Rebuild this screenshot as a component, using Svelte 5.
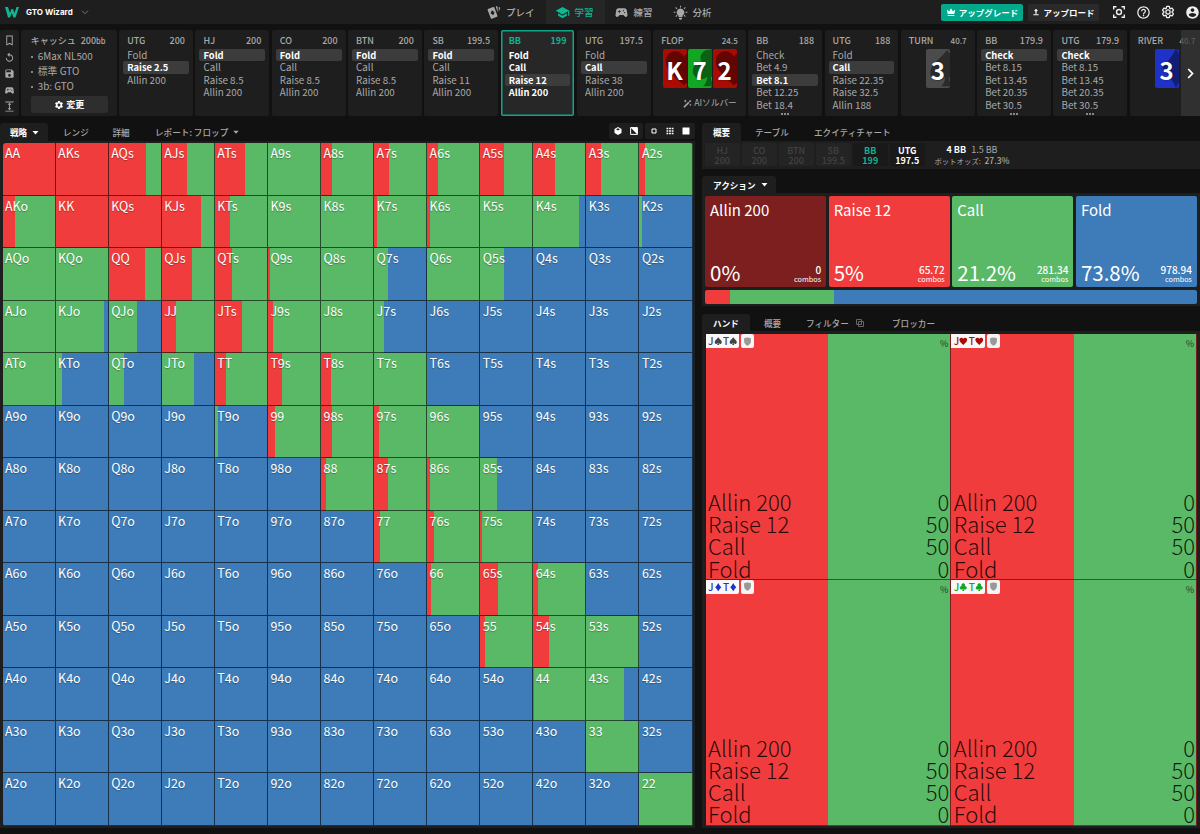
<script>
  const ranks = ['A', 'K', 'Q', 'J', 'T', '9', '8', '7', '6', '5', '4', '3', '2'];

  // r = raise then call, g = call then fold, b = fold; the number is the first share in %
  const strategy = [
    'r r r70 r47 r56 g r20 r28 r21 r46 r42 r28 r11',
    'r23 r r r74 r28 g g r5 r5 g g87 b g6',
    'g g r67 r57 r33 r4 g g26 g g46 b b b',
    'g g90 g53 r27 r50 r9 g g18 b b b b b',
    'g g11 g29 g60 r20 r26 r19 g b b b b b',
    'b b b b g6 r14 r20 r9 g b b b b',
    'b b b b b b r10 r27 r5 g33 b b b',
    'b b b b b b b r11 r13 r4 b b b',
    'b b b b b b b b r7 r34 r10 b b',
    'b b b b b b b b b r9 r30 g b',
    'b b b b b b b b b b r2 g72 b',
    'b b b b b b b b b b b g b',
    'b b b b b b b b b b b b g'
  ];

  const colors = { r: '#f03c3c', g: '#5ab966', b: '#3d7cb8' };
  const next = { r: 'g', g: 'b', b: 'b' };

  function handName(row, col) {
    if (row === col) return ranks[row] + ranks[row];
    return row < col ? ranks[row] + ranks[col] + 's' : ranks[col] + ranks[row] + 'o';
  }

  function fill(code) {
    const kind = code[0];
    const share = code.length > 1 ? Number(code.slice(1)) : 100;
    return `linear-gradient(90deg, ${colors[kind]} ${share}%, ${colors[next[kind]]} ${share}%)`;
  }

  const cells = strategy.flatMap((line, row) =>
    line.split(' ').map((code, col) => ({ name: handName(row, col), background: fill(code) }))
  );

  const steps = [
    { name: 'UTG', stack: '200', actions: ['Fold', 'Raise 2.5', 'Allin 200'], picked: 1 },
    { name: 'HJ', stack: '200', actions: ['Fold', 'Call', 'Raise 8.5', 'Allin 200'], picked: 0 },
    { name: 'CO', stack: '200', actions: ['Fold', 'Call', 'Raise 8.5', 'Allin 200'], picked: 0 },
    { name: 'BTN', stack: '200', actions: ['Fold', 'Call', 'Raise 8.5', 'Allin 200'], picked: 0 },
    { name: 'SB', stack: '199.5', actions: ['Fold', 'Call', 'Raise 11', 'Allin 200'], picked: 0 },
    { name: 'BB', stack: '199', actions: ['Fold', 'Call', 'Raise 12', 'Allin 200'], picked: 2, active: true },
    { name: 'UTG', stack: '197.5', actions: ['Fold', 'Call', 'Raise 38', 'Allin 200'], picked: 1 },
    { name: 'FLOP', stack: '24.5', cards: [['K', 'heart'], ['7', 'club'], ['2', 'heart']] },
    { name: 'BB', stack: '188', actions: ['Check', 'Bet 4.9', 'Bet 8.1', 'Bet 12.25', 'Bet 18.4'], picked: 2, more: true },
    { name: 'UTG', stack: '188', actions: ['Fold', 'Call', 'Raise 22.35', 'Raise 32.5', 'Allin 188'], picked: 1 },
    { name: 'TURN', stack: '40.7', cards: [['3', 'spade']] },
    { name: 'BB', stack: '179.9', actions: ['Check', 'Bet 8.15', 'Bet 13.45', 'Bet 20.35', 'Bet 30.5'], picked: 0, more: true },
    { name: 'UTG', stack: '179.9', actions: ['Check', 'Bet 8.15', 'Bet 13.45', 'Bet 20.35', 'Bet 30.5'], picked: 0, more: true },
    { name: 'RIVER', stack: '40.7', cards: [['3', 'diamond']] }
  ];

  const positions = [
    { name: 'HJ', stack: '200', state: 'out' },
    { name: 'CO', stack: '200', state: 'out' },
    { name: 'BTN', stack: '200', state: 'out' },
    { name: 'SB', stack: '199.5', state: 'out' },
    { name: 'BB', stack: '199', state: 'hero' },
    { name: 'UTG', stack: '197.5', state: 'live' }
  ];

  const actions = [
    { name: 'Allin 200', share: '0%', combos: '0', kind: 'allin' },
    { name: 'Raise 12', share: '5%', combos: '65.72', kind: 'raise' },
    { name: 'Call', share: '21.2%', combos: '281.34', kind: 'call' },
    { name: 'Fold', share: '73.8%', combos: '978.94', kind: 'fold' }
  ];

  const hands = ['spade', 'heart', 'diamond', 'club'];
  const handRows = [['Allin 200', 0], ['Raise 12', 50], ['Call', 50], ['Fold', 0]];

  const gear = 'M19.14 12.94c.04-.3.06-.61.06-.94 0-.32-.02-.64-.07-.94l2.03-1.58c.18-.14.23-.41.12-.61l-1.92-3.32c-.12-.22-.37-.29-.59-.22l-2.39.96c-.5-.38-1.03-.7-1.62-.94l-.36-2.54c-.04-.24-.24-.41-.48-.41h-3.84c-.24 0-.43.17-.47.41l-.36 2.54c-.59.24-1.13.57-1.62.94l-2.39-.96c-.22-.08-.47 0-.59.22L2.74 8.87c-.12.21-.08.47.12.61l2.03 1.58c-.05.3-.09.63-.09.94s.02.64.07.94l-2.03 1.58c-.18.14-.23.41-.12.61l1.92 3.32c.12.22.37.29.59.22l2.39-.96c.5.38 1.03.7 1.62.94l.36 2.54c.05.24.24.41.48.41h3.84c.24 0 .44-.17.47-.41l.36-2.54c.59-.24 1.13-.56 1.62-.94l2.39.96c.22.08.47 0 .59-.22l1.92-3.32c.12-.22.07-.47-.12-.61l-2.01-1.58zM12 15.6c-1.98 0-3.6-1.62-3.6-3.6s1.62-3.6 3.6-3.6 3.6 1.62 3.6 3.6-1.62 3.6-3.6 3.6z';

  const icons = {
    bookmark: 'M19 1H5v22l7-3.6 7 3.6zm-2 18.6l-5-2.5-5 2.5V3h10z',
    replay: 'M12 5V1L7 6l5 5V7c3.31 0 6 2.69 6 6s-2.69 6-6 6-6-2.69-6-6H4c0 4.42 3.58 8 8 8s8-3.58 8-8-3.58-8-8-8z',
    save: 'M17 3H5c-1.11 0-2 .9-2 2v14c0 1.1.89 2 2 2h14c1.1 0 2-.9 2-2V7l-4-4zm-5 16c-1.66 0-3-1.34-3-3s1.34-3 3-3 3 1.34 3 3-1.34 3-3 3zm3-10H5V5h10v4z',
    gamepad: 'M21.58 16.09l-1.09-7.66C20.21 6.46 18.52 5 16.53 5H7.47C5.48 5 3.79 6.46 3.51 8.43l-1.09 7.66C2.2 17.63 3.39 19 4.94 19c.68 0 1.32-.27 1.8-.75L9 16h6l2.25 2.25c.48.48 1.13.75 1.8.75 1.56 0 2.75-1.37 2.53-2.91zM11 11H9v2H8v-2H6v-1h2V8h1v2h2v1zm4-1c-.55 0-1-.45-1-1s.45-1 1-1 1 .45 1 1-.45 1-1 1zm2 3c-.55 0-1-.45-1-1s.45-1 1-1 1 .45 1 1-.45 1-1 1z',
    expand: 'M3 1h18v2H3zM3 21h18v2H3zM12 4l4 4h-3v8h3l-4 4-4-4h3V8H8z',
    cards: 'M3 6.5l8.500-3.300c.8-.3 1.500 0 1.800.8l5 13c.3.8 0 1.500-.8 1.800L9.500 22c-.8.300-1.500 0-1.800-.8l-5-13c-.3-.8-.1-1.400.3-1.700zM9.500 8.500l-2.300 4.800 4.500 3.200 2-5zM15.500 2h1.800c.8 0 1.300.5 1.300 1.300v8.500zM20.500 3l1.300.5c.8.3 1 1 .7 1.700l-2 5.500z',
    school: 'M5 13.18v4L12 21l7-3.82v-4L12 17l-7-3.82zM12 3L1 9l11 6 9-4.91V17h2V9L12 3z',
    bulb: 'M12 5.500a6 6 0 0 0-3.200 11.100V19h6.400v-2.400A6 6 0 0 0 12 5.500zM9.500 20.200h5V22l-1.500 1.500h-2L9.500 22zM11.200 1h1.600v3h-1.600zM1 10.700h3v1.600H1zM20 10.700h3v1.600h-3zM3.600 4.500l1.200-1.200L7 5.500 5.800 6.700zM17 5.500l2.200-2.200 1.200 1.200-2.200 2.200zM3.800 17.800L6 15.600l1.200 1.200L5 19zM17 16.800l1.200-1.200 2.200 2.200-1.200 1.200z',
    crown: 'M2 6l5.500 4.500L12 3l4.500 7.500L22 6l-2 11H4zM4 19h16v2.500H4z',
    upload: 'M12 2l6 7h-4v8h-4V9H6zM4 19h16v3H4z',
    gear,
    help: 'M11 18h2v-2h-2v2zm1-16C6.48 2 2 6.48 2 12s4.48 10 10 10 10-4.48 10-10S17.52 2 12 2zm0 18c-4.41 0-8-3.59-8-8s3.59-8 8-8 8 3.59 8 8-3.59 8-8 8zm0-14c-2.21 0-4 1.79-4 4h2c0-1.1.9-2 2-2s2 .9 2 2c0 2-3 1.75-3 5h2c0-2.25 3-2.5 3-5 0-2.21-1.79-4-4-4z',
    account: 'M12 2C6.48 2 2 6.48 2 12s4.48 10 10 10 10-4.48 10-10S17.52 2 12 2zm0 3c1.66 0 3 1.34 3 3s-1.34 3-3 3-3-1.34-3-3 1.34-3 3-3zm0 14.2c-2.5 0-4.71-1.28-6-3.22.03-1.99 4-3.08 6-3.08 1.99 0 5.97 1.09 6 3.08-1.29 1.94-3.5 3.22-6 3.22z',
    wand: 'M1 20.500L14 7.500l3 3L4 23.500zM15.500 6L19 2.500l3 3L18.500 9zM6 1l1.300 3.200L10.500 5.500 7.300 6.800 6 10 4.700 6.800 1.500 5.500 4.700 4.200zM19.500 12l1 2.500 2.500 1-2.500 1-1 2.500-1-2.500-2.500-1 2.500-1z',
    caret: 'M4 8h16l-8 9z',
    shield: 'M3 3.500Q12-.5 21 3.500V12c0 5-4 9-9 11-5-2-9-6-9-11z',
    spade: 'M12 1C9 6 2 9.500 2 14.500c0 3.300 2.500 5 4.800 5 1.700 0 3.100-.8 4.200-2.300-.2 2.500-1 4.300-2.600 5.800h7.200c-1.600-1.500-2.400-3.300-2.600-5.800 1.100 1.500 2.500 2.300 4.200 2.300 2.300 0 4.800-1.700 4.800-5C22 9.500 15 6 12 1z',
    heart: 'M12 22.500C6 17 1 13 1 8c0-3.500 2.600-6 5.800-6C9 2 11 3.200 12 5.200 13 3.200 15 2 17.200 2 20.400 2 23 4.500 23 8c0 5-5 9-11 14.500z',
    diamond: 'M12 0c2 4.500 5 8.500 8.500 12-3.500 3.500-6.500 7.500-8.500 12-2-4.500-5-8.500-8.500-12C7 8.500 10 4.500 12 0z',
    club: 'M12 1a5 5 0 0 0-4.300 7.700A5 5 0 1 0 11 17c-.2 2.500-1 4.500-2.600 6h7.200c-1.600-1.500-2.400-3.500-2.600-6a5 5 0 1 0 3.300-8.300A5 5 0 0 0 12 1z'
  };
</script>

{#snippet icon(name, size)}
  <svg class="icon" width={size} height={size} viewBox="0 0 24 24"><path d={icons[name]} fill="currentColor" fill-rule={name === 'club' ? 'nonzero' : 'evenodd'} /></svg>
{/snippet}

<div class="app">
  <header class="topbar">
    <div class="brand">
      <svg width="14" height="11" viewBox="0 0 28 22">
        <path d="M0 0h6l4 12 3-8h3l3 8 4-12h5l-7 21h-4l-3.500-9L10 21H6z" fill="#10b592" />
      </svg>
      <span>GTO Wizard</span>
      <svg class="chev" width="8" height="5" viewBox="0 0 8 5"><path d="M1 .7l3 3 3-3" fill="none" stroke="#777" /></svg>
    </div>
    <nav>
      <a href="#play">{@render icon('cards', 15)}プレイ</a>
      <a href="#study" class="on">{@render icon('school', 15)}学習</a>
      <a href="#practice">{@render icon('gamepad', 15)}練習</a>
      <a href="#analyze">{@render icon('bulb', 15)}分析</a>
    </nav>
    <div class="tools">
      <button class="upgrade">{@render icon('crown', 10)}アップグレード</button>
      <button class="upload">{@render icon('upload', 8)}アップロード</button>
      <svg class="tool focus" width="12" height="12" viewBox="0 0 12 12" fill="none" stroke="#eee" stroke-width="1.4">
        <path d="M.7 3.500V.7h2.800M8.500.7h2.800v2.800M11.300 8.500v2.800H8.500M3.500 11.300H.7V8.500" />
        <circle cx="6" cy="6" r="2.5" />
      </svg>
      <span class="tool">{@render icon('help', 15)}</span>
      <svg class="tool" width="14" height="14" viewBox="0 0 24 24"><path d={gear} fill="none" stroke="#eee" stroke-width="2.2" /></svg>
      <span class="tool">{@render icon('account', 15)}</span>
    </div>
  </header>

  <section class="history">
    <div class="rail">
      {#each ['bookmark', 'replay', 'save', 'gamepad', 'expand'] as name}
        {@render icon(name, 11)}
      {/each}
    </div>
    <div class="setup">
      <div class="setup-title"><span>キャッシュ</span><span>200<small>bb</small></span></div>
      <ul>
        <li>6Max NL500</li>
        <li>標準 GTO</li>
        <li>3b: GTO</li>
      </ul>
      <button>{@render icon('gear', 10)}変更</button>
    </div>
    {#each steps as step}
      <div class="step" class:active={step.active} class:flop={step.name === 'FLOP'}>
        <div class="step-head" class:street={step.cards}><span>{step.name}</span><span>{step.stack}</span></div>
        {#if step.cards}
          <div class="board">
            {#each step.cards as [rank, suit]}
              <div class="card {suit}"><span class="pip">{@render icon(suit, 40)}</span><b>{rank}</b></div>
            {/each}
          </div>
          {#if step.name === 'FLOP'}
            <div class="solver">{@render icon('wand', 9)}AIソルバー</div>
          {/if}
        {:else}
          {#each step.actions as action, i}
            <div class="action" class:picked={step.picked === i}>{action}</div>
          {/each}
          {#if step.more}<div class="more"><i></i><i></i><i></i></div>{/if}
        {/if}
      </div>
    {/each}
    <button class="scroll" aria-label="next">
      <svg width="7" height="11" viewBox="0 0 7 11"><path d="M1.200 1l4.300 4.500L1.200 10" fill="none" stroke="#fff" stroke-width="1.8" /></svg>
    </button>
  </section>

  <main>
    <section class="left">
      <div class="tabs">
        <span class="tab on strategy">戦略{@render icon('caret', 9)}</span>
        <span class="tab range">レンジ</span>
        <span class="tab detail">詳細</span>
        <span class="tab report">レポート: フロップ{@render icon('caret', 8)}</span>
        <div class="views">
          <div class="view-group">
            <svg width="8" height="8" viewBox="0 0 8 8"><path d="M4 0l3.500 2v4L4 8 .5 6V2z" fill="#fff" /><path d="M4 1.200L6 2.300 4 3.400 2 2.300z" fill="#222" /></svg>
            <svg width="8" height="8" viewBox="0 0 8 8"><path d="M.6.6h6.800v6.800H.6z" fill="none" stroke="#fff" /><path d="M.6.6l6.800 6.800V.6z" fill="#fff" /></svg>
          </div>
          <div class="view-group">
            <svg width="8" height="8" viewBox="0 0 8 8"><path d="M3 1v2H1M5 1v2h2M3 7V5H1M5 7V5h2" fill="none" stroke="#fff" stroke-width="1" /></svg>
            <svg width="8" height="8" viewBox="0 0 8 8"><path d="M.5 1.500h7M.5 4h7M.5 6.500h7" stroke="#fff" stroke-width="1.6" stroke-dasharray="1.8 .8" /></svg>
            <svg width="8" height="8" viewBox="0 0 8 8"><path d="M.5.500h7v7h-7z" fill="#fff" /></svg>
          </div>
        </div>
      </div>
      <div class="matrix-panel">
        <div class="matrix">
          {#each cells as cell}
            <div class="cell" style="background: {cell.background}">{cell.name}</div>
          {/each}
        </div>
      </div>
    </section>

    <section class="right">
      <div class="tabs">
        <span class="tab on first">概要</span>
        <span class="tab table">テーブル</span>
        <span class="tab">エクイティチャート</span>
      </div>
      <div class="seats">
        {#each positions as p}
          <div class="seat {p.state}"><span>{p.name}</span><span>{p.stack}</span></div>
        {/each}
        <div class="pot">
          <div class="blinds"><b>4 BB</b><span>1.5 BB</span></div>
          <div class="odds">ポットオッズ: <b>27.3%</b></div>
        </div>
      </div>

      <div class="tabs action-tabs">
        <span class="tab on action-tab">アクション{@render icon('caret', 9)}</span>
      </div>
      <div class="actions-panel">
        <div class="action-cards">
          {#each actions as a}
            <div class="action-card {a.kind}">
              <div class="title">{a.name}</div>
              <div class="numbers">
                <span class="share">{a.share}</span>
                <span class="combos">{a.combos}<small>combos</small></span>
              </div>
            </div>
          {/each}
        </div>
        <div class="bar">
          {#each actions as a}
            <div class={a.kind} style="width: {a.share}"></div>
          {/each}
        </div>
      </div>

      <div class="tabs hand-tabs">
        <span class="tab on first">ハンド</span>
        <span class="tab summary">概要</span>
        <span class="tab filter">フィルター
          <svg width="8" height="8" viewBox="0 0 8 8" fill="none" stroke="#666"><path d="M.5.500h5v5h-5zM2.500 2.500h5v5h-5z" /></svg>
        </span>
        <span class="tab">ブロッカー</span>
      </div>
      <div class="hands-panel">
        <div class="hands">
          {#each hands as suit}
            <div class="hand">
              <div class="hand-top">
                <span class="combo {suit}">J{@render icon(suit, 8.5)}<em>T</em>{@render icon(suit, 8.5)}</span>
                <span class="guard">{@render icon('shield', 9)}</span>
                <span class="unit">%</span>
              </div>
              <div class="hand-rows">
                {#each handRows as [name, value]}
                  <div class="hand-row"><span>{name}</span><span>{value}</span></div>
                {/each}
              </div>
            </div>
          {/each}
        </div>
      </div>
    </section>
  </main>
</div>

<style>
  :global(body) {
    background: #111;
    overflow: hidden;
  }

  .app {
    width: 1200px;
    height: 834px;
    overflow: hidden;
    display: flex;
    flex-direction: column;
    background: #111;
    color: #a9a9a9;
    font-family: 'Noto Sans CJK JP', sans-serif;
    font-size: 9.5px;
    line-height: 12px;
  }

  .app * {
    box-sizing: border-box;
  }

  .icon {
    display: block;
    flex-shrink: 0;
  }

  button {
    border: 0;
    padding: 0;
    font: inherit;
    display: flex;
    align-items: center;
    justify-content: center;
  }

  .topbar {
    height: 24px;
    flex-shrink: 0;
    display: flex;
    align-items: center;
    background: #1e1e1e;
  }

  .brand {
    width: 477px;
    padding-left: 5px;
    display: flex;
    align-items: center;
    gap: 7px;
    color: #fff;
    font: 700 8px/12px Inter, sans-serif;
  }

  .chev {
    margin-left: 1px;
  }

  nav {
    display: flex;
    height: 24px;
    font-weight: 500;
  }

  nav a {
    display: flex;
    align-items: center;
    gap: 5px;
    padding: 0 11px 0 9px;
    color: #a9a9a9;
    text-decoration: none;
  }

  nav a.on {
    color: #10b592;
    background: #262626;
  }

  .tools {
    margin-left: auto;
    display: flex;
    align-items: center;
    color: #eee;
  }

  .upgrade,
  .upload {
    height: 17px;
    gap: 3px;
    border-radius: 2px;
    color: #fff;
    font-weight: 700;
    font-size: 8.5px;
  }

  .upgrade {
    width: 82px;
    background: #02a88a;
  }

  .upload {
    width: 71px;
    margin: 0 14px 0 5px;
    background: #2a2a2a;
  }

  .tool {
    margin-right: 10px;
    flex-shrink: 0;
  }

  .tool.focus {
    margin-right: 11px;
  }

  .tool:last-child {
    margin-right: 0;
  }

  .history {
    position: relative;
    display: flex;
    gap: 2.5px;
    height: 86px;
    margin-top: 6px;
    flex-shrink: 0;
  }

  .rail {
    width: 18.7px;
    flex-shrink: 0;
    padding: 5px 0 4px;
    display: flex;
    flex-direction: column;
    align-items: center;
    justify-content: space-between;
    background: #1e1e1e;
    border-radius: 2px;
  }

  .setup {
    width: 95.5px;
    flex-shrink: 0;
    padding: 5px 9.5px;
    background: #1e1e1e;
    border-radius: 2px;
  }

  .setup-title {
    display: flex;
    gap: 5px;
    font-weight: 500;
    font-size: 9px;
  }

  .setup-title small {
    font-size: 7.5px;
  }

  ul {
    list-style: none;
    margin: 2px 0 0;
    padding: 0;
    font-size: 9.9px;
    line-height: 15px;
  }

  li {
    display: flex;
    align-items: center;
    gap: 5px;
  }

  li::before {
    content: '';
    width: 2px;
    height: 2px;
    border-radius: 50%;
    background: #a9a9a9;
  }

  .setup button {
    width: 77px;
    height: 17px;
    margin-top: 2px;
    gap: 2px;
    border-radius: 2px;
    background: #2e2e2e;
    color: #fff;
    font-size: 9px;
    font-weight: 700;
  }

  .step {
    width: 73.8px;
    flex-shrink: 0;
    padding: 5px 4px 0;
    background: #1e1e1e;
    border-radius: 2px;
  }

  .step.flop {
    width: 92.5px;
  }

  .step.active {
    background: #272727;
    box-shadow: inset 0 0 0 1.5px #10a586;
  }

  .step-head {
    display: flex;
    justify-content: space-between;
    padding: 0 4px;
    margin-bottom: 2px;
    font-weight: 500;
    font-size: 9px;
  }

  .step-head.street span:last-child {
    font-size: 8px;
  }

  .active .step-head {
    color: #10b592;
    font-weight: 700;
  }

  .action {
    height: 12.4px;
    padding-left: 4px;
    border-radius: 2px;
    font-size: 9.8px;
    white-space: nowrap;
  }

  .active .action,
  .action.picked {
    color: #fff;
    font-weight: 700;
    font-size: 9.4px;
  }

  .action.picked {
    background: #3c3c3c;
  }

  .more {
    display: flex;
    justify-content: center;
    gap: 1px;
    margin-top: 2px;
  }

  .more i {
    width: 2px;
    height: 2px;
    background: #888;
  }

  .board {
    display: flex;
    justify-content: center;
    gap: 1px;
    margin-top: 1px;
  }

  .card {
    position: relative;
    width: 24px;
    height: 39px;
    overflow: hidden;
    border-radius: 2px;
    display: flex;
    align-items: center;
    justify-content: center;
    color: #fff;
    font-size: 24px;
  }

  .card b {
    position: relative;
    padding-top: 2px;
    text-shadow: 0 0 2px rgba(0, 0, 0, 0.4);
  }

  .pip {
    position: absolute;
    left: 1px;
    top: -1px;
    color: rgba(0, 0, 0, 0.42);
  }

  .card.heart {
    background: #ab0b03;
  }

  .card.club {
    background: #12a722;
  }

  .card.spade {
    background: #4b4b4b;
  }

  .card.diamond {
    background: #1f32c8;
  }

  .solver {
    display: flex;
    justify-content: flex-end;
    align-items: center;
    gap: 2px;
    margin-top: 9px;
    padding-right: 5px;
    font-size: 8.7px;
  }

  .scroll {
    position: absolute;
    right: 0;
    top: 0;
    width: 19px;
    height: 86px;
    background: rgba(56, 56, 56, 0.7);
  }

  main {
    display: flex;
    gap: 7px;
    margin-top: 7px;
  }

  .left {
    width: 695px;
  }

  .right {
    width: 498px;
  }

  .tabs {
    display: flex;
    height: 18px;
    font-size: 8.6px;
    font-weight: 500;
  }

  .tab {
    display: flex;
    align-items: center;
    gap: 5px;
    white-space: nowrap;
  }

  .tab.on {
    color: #fff;
    font-weight: 700;
    background: #1e1e1e;
    border-radius: 3px 3px 0 0;
  }

  .strategy {
    width: 48px;
    padding-left: 10px;
    gap: 4px;
    margin-right: 15px;
  }

  .range {
    width: 49.5px;
  }

  .detail {
    width: 42.5px;
  }

  .report {
    gap: 4px;
  }

  .views {
    display: flex;
    gap: 2px;
    margin-left: auto;
    height: 16px;
  }

  .view-group {
    display: flex;
    align-items: center;
    gap: 8px;
    padding: 0 5px;
    background: #1e1e1e;
    border-radius: 2px;
  }

  .matrix-panel {
    height: 687px;
    padding: 2px 2.5px;
    background: #1e1e1e;
  }

  .matrix {
    width: 690px;
    height: 683px;
    display: grid;
    grid-template-columns: repeat(13, 1fr);
    grid-template-rows: repeat(13, 1fr);
    border-radius: 3px;
    overflow: hidden;
  }

  .cell {
    padding: 2px 0 0 2.5px;
    border-right: 1px solid rgba(0, 0, 0, 0.6);
    border-bottom: 1px solid rgba(0, 0, 0, 0.6);
    background-origin: border-box !important;
    color: #fff;
    font-size: 12.5px;
    line-height: 15px;
    text-shadow: 0 1px 1px rgba(0, 0, 0, 0.3);
  }

  .first {
    width: 39px;
    justify-content: center;
    margin-right: 14px;
  }

  .table {
    width: 59px;
  }

  .seats {
    display: flex;
    gap: 2.5px;
    height: 28px;
    padding: 2px 3px 3px;
    background: #1e1e1e;
  }

  .seat {
    width: 34.5px;
    padding-top: 3px;
    display: flex;
    flex-direction: column;
    align-items: center;
    background: #242424;
    border-radius: 2px;
    font-size: 9px;
    line-height: 9.5px;
    font-weight: 500;
  }

  .out {
    color: #424242;
  }

  .hero {
    color: #10b592;
    font-weight: 700;
    background: #191919;
  }

  .live {
    color: #fff;
    font-weight: 700;
    background: #191919;
  }

  .pot {
    width: 90px;
    padding-top: 1px;
    font-size: 9px;
    line-height: 11px;
  }

  .blinds {
    display: flex;
    justify-content: center;
    gap: 5px;
  }

  .blinds b {
    color: #fff;
  }

  .odds {
    text-align: center;
    font-size: 7.4px;
    white-space: nowrap;
  }

  .odds b {
    margin-left: 2px;
    font-size: 8.5px;
    font-weight: 500;
  }

  .action-tabs {
    margin-top: 7px;
    height: 17px;
  }

  .action-tab {
    width: 74px;
    padding-left: 11px;
    gap: 4px;
  }

  .actions-panel {
    height: 113px;
    padding: 3px;
    background: #1e1e1e;
  }

  .action-cards {
    display: grid;
    grid-template-columns: repeat(4, 1fr);
    gap: 2.5px;
    height: 91px;
  }

  .action-card {
    display: flex;
    flex-direction: column;
    justify-content: space-between;
    padding: 4px 5px 3px;
    border-radius: 2px;
    color: #fff;
  }

  .allin {
    background: #7d1f1f;
  }

  .raise {
    background: #f03c3c;
  }

  .call {
    background: #5ab966;
  }

  .fold {
    background: #3d7cb8;
  }

  .title {
    font-size: 15px;
    line-height: 19px;
  }

  .numbers {
    display: flex;
    justify-content: space-between;
    align-items: flex-end;
  }

  .share {
    font-size: 20.5px;
    line-height: 23px;
  }

  .combos {
    display: flex;
    flex-direction: column;
    align-items: flex-end;
    font-size: 10px;
    line-height: 10px;
    font-weight: 500;
  }

  .combos small {
    font-size: 7.3px;
    line-height: 9px;
    font-weight: 400;
  }

  .bar {
    display: flex;
    height: 14px;
    margin-top: 3px;
    border-radius: 2px;
    overflow: hidden;
  }

  .hand-tabs {
    margin-top: 8px;
    height: 17px;
  }

  .hand-tabs .first {
    width: 48px;
  }

  .summary {
    width: 42px;
  }

  .filter {
    width: 86px;
    gap: 7px;
  }

  .hands-panel {
    height: 497px;
    padding: 3px 3px 3px 3.5px;
    background: #1e1e1e;
  }

  .hands {
    height: 491.5px;
    display: grid;
    grid-template-columns: 1fr 1fr;
    grid-template-rows: 1fr 1fr;
  }

  .hand {
    display: flex;
    flex-direction: column;
    justify-content: space-between;
    background: linear-gradient(90deg, #f03c3c 50%, #5ab966 50%);
    border: 1px solid rgba(0, 0, 0, 0.5);
    border-width: 0 1px 1px 0;
  }

  .hand-top {
    display: flex;
    gap: 2px;
    align-items: flex-start;
    padding-right: 2px;
  }

  .combo {
    display: flex;
    align-items: center;
    width: 33.5px;
    height: 14px;
    padding-left: 2.5px;
    background: #f8f8f8;
    border-radius: 0 0 2px 0;
    font-size: 10px;
    font-weight: 500;
  }

  .combo em {
    font-style: normal;
    margin-left: 1px;
  }

  .combo.spade {
    color: #444;
  }

  .combo.heart {
    color: #ab0b03;
  }

  .combo.diamond {
    color: #1f32c8;
  }

  .combo.club {
    color: #12a722;
  }

  .guard {
    width: 13px;
    height: 14px;
    display: flex;
    align-items: center;
    justify-content: center;
    background: #f4f4f4;
    border-radius: 2px;
    color: #999;
  }

  .unit {
    margin: 4px 0 0 auto;
    font-size: 9px;
    color: #223d25;
  }

  .hand-rows {
    padding: 0 1px 0 2.5px;
    color: rgba(0, 0, 0, 0.85);
    font-size: 22px;
    line-height: 22.2px;
    font-weight: 300;
  }

  .hand-row {
    display: flex;
    justify-content: space-between;
  }
</style>
